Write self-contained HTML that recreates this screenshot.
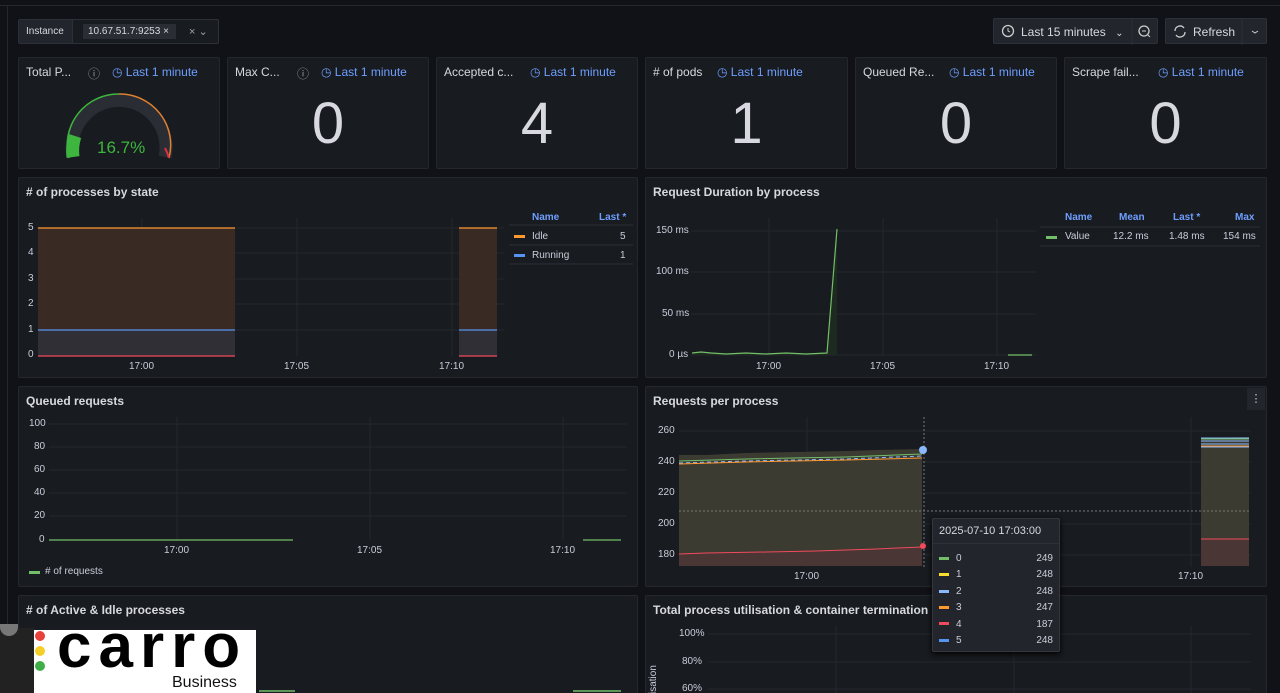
<!DOCTYPE html>
<html><head><meta charset="utf-8"><style>
*{box-sizing:border-box;margin:0;padding:0}
html,body{width:1280px;height:693px;overflow:hidden}
body{background:#111217;font-family:"Liberation Sans",sans-serif;color:#ccccdc;position:relative;font-size:11px}
.p{position:absolute;background:#181b1f;border:1px solid #24272e;border-radius:2px;overflow:hidden}
.t{position:absolute;left:7px;top:7px;font-size:12px;font-weight:bold;color:#d8d9e0}
.lm{position:absolute;top:7px;font-size:12px;color:#6e9fff}
.big{position:absolute;left:0;right:0;top:32px;text-align:center;font-size:58px;color:#d8d9e0}
.ax{position:absolute;font-size:10px;color:#ccccdc}
svg{position:absolute;left:0;top:0}
.btn{position:absolute;background:#22252b;border:1px solid #2c3038;border-radius:2px;color:#d8d9e0;font-size:12px}
</style></head><body>
<div style="position:absolute;left:0;top:0;width:1280px;height:6px;border-bottom:1px solid #24272e"></div>
<div style="position:absolute;left:0;top:6px;width:8px;height:687px;border-right:1px solid #24272e"></div>
<!-- instance -->
<div class="btn" style="left:18px;top:19px;width:201px;height:25px;background:#181b1f">
<div style="position:absolute;left:0;top:0;width:54px;height:23px;border-right:1px solid #2c3038;background:#22252b;padding:6px 0 0 7px;font-size:10px">Instance</div>
<div style="position:absolute;left:64px;top:4px;width:93px;height:15px;background:#2a2d33;font-size:10px;padding:2px 0 0 5px">10.67.51.7:9253 ×</div>
<div style="position:absolute;left:170px;top:5px;font-size:11px;color:#9fa1a8">× ⌄</div></div>
<div class="btn" style="left:993px;top:18px;width:165px;height:26px;padding:6px 0 0 27px">Last 15 minutes <span style="margin-left:6px;font-size:10px">⌄</span>
<svg width="165" height="26"><circle cx="14" cy="12" r="5.5" fill="none" stroke="#ccc" stroke-width="1.3"/><path d="M14 9v3l2 1" stroke="#ccc" fill="none"/><line x1="138" y1="0" x2="138" y2="26" stroke="#2c3038"/><circle cx="150" cy="12" r="5" fill="none" stroke="#ccc" stroke-width="1.3"/><path d="M148 12h4M154 16l2 2" stroke="#ccc"/></svg></div>
<div class="btn" style="left:1165px;top:18px;width:102px;height:26px;padding:6px 0 0 27px">Refresh
<svg width="102" height="26"><path d="M9 12a5 5 0 0 1 9-3M19 13a5 5 0 0 1-9 3" stroke="#ccc" fill="none" stroke-width="1.3"/><line x1="76" y1="0" x2="76" y2="26" stroke="#2c3038"/><path d="M86 12l3 2 3-2" stroke="#ccc" fill="none"/></svg></div>

<!-- stats -->
<div class="p" style="left:18px;top:57px;width:202px;height:112px"><div class="t" style="font-weight:normal">Total P...</div><div class="lm" style="left:69px;color:#999">ⓘ</div><div class="lm" style="left:93px">◷ Last 1 minute</div>
<svg width="202" height="112"><path d="M54 99A47 47 0 1 1 146 99" fill="none" stroke="#2a2d33" stroke-width="13"/><path d="M54 99A47 47 0 0 1 56 78" fill="none" stroke="#3eb53e" stroke-width="13"/><path d="M50 100A51 51 0 0 1 100 36" fill="none" stroke="#3eb53e" stroke-width="1.5"/><path d="M100 36A51 51 0 0 1 150 100" fill="none" stroke="#e08030" stroke-width="1.5"/><path d="M146 90A51 51 0 0 1 150 100" fill="none" stroke="#e02f44" stroke-width="2"/></svg>
<div style="position:absolute;left:78px;top:80px;font-size:17px;color:#3eb53e">16.7%</div></div>
<div class="p" style="left:227px;top:57px;width:202px;height:112px"><div class="t" style="font-weight:normal">Max C...</div><div class="lm" style="left:69px;color:#999">ⓘ</div><div class="lm" style="left:93px">◷ Last 1 minute</div><div class="big">0</div></div>
<div class="p" style="left:436px;top:57px;width:202px;height:112px"><div class="t" style="font-weight:normal">Accepted c...</div><div class="lm" style="left:93px">◷ Last 1 minute</div><div class="big">4</div></div>
<div class="p" style="left:645px;top:57px;width:203px;height:112px"><div class="t" style="font-weight:normal">#&nbsp;of pods</div><div class="lm" style="left:71px">◷ Last 1 minute</div><div class="big">1</div></div>
<div class="p" style="left:855px;top:57px;width:202px;height:112px"><div class="t" style="font-weight:normal">Queued Re...</div><div class="lm" style="left:93px">◷ Last 1 minute</div><div class="big">0</div></div>
<div class="p" style="left:1064px;top:57px;width:203px;height:112px"><div class="t" style="font-weight:normal">Scrape fail...</div><div class="lm" style="left:93px">◷ Last 1 minute</div><div class="big">0</div></div>

<!-- processes by state -->
<div class="p" style="left:18px;top:177px;width:620px;height:201px"><div class="t">#&nbsp;of processes by state</div>
<svg width="620" height="201"><g stroke="#24272e"><line x1="18" y1="50" x2="485" y2="50"/><line x1="18" y1="75" x2="485" y2="75"/><line x1="18" y1="101" x2="485" y2="101"/><line x1="18" y1="126" x2="485" y2="126"/><line x1="18" y1="152" x2="485" y2="152"/><line x1="123" y1="40" x2="123" y2="178"/><line x1="278" y1="40" x2="278" y2="178"/><line x1="433" y1="40" x2="433" y2="178"/></g>
<rect x="19" y="50" width="197" height="102" fill="#3a2a24"/><rect x="19" y="152" width="197" height="26" fill="#302f36"/><rect x="440" y="50" width="38" height="102" fill="#3a2a24"/><rect x="440" y="152" width="38" height="26" fill="#302f36"/>
<path d="M19 50h197M440 50h38" stroke="#ff9830" stroke-width="1.2"/><path d="M19 152h197M440 152h38" stroke="#5794f2" stroke-width="1.2"/><path d="M19 178h197M440 178h38" stroke="#f2495c" stroke-width="1.2"/>
<line x1="490" y1="47" x2="614" y2="47" stroke="#2c3038"/><line x1="490" y1="67" x2="614" y2="67" stroke="#2c3038"/><line x1="490" y1="86" x2="614" y2="86" stroke="#2c3038"/>
<rect x="495" y="57" width="11" height="3" fill="#ff9830"/><rect x="495" y="76" width="11" height="3" fill="#5794f2"/></svg>
<div class="ax" style="left:9px;top:44px">5</div><div class="ax" style="left:9px;top:69px">4</div><div class="ax" style="left:9px;top:95px">3</div><div class="ax" style="left:9px;top:120px">2</div><div class="ax" style="left:9px;top:146px">1</div><div class="ax" style="left:9px;top:171px">0</div>
<div class="ax" style="left:110px;top:183px">17:00</div><div class="ax" style="left:265px;top:183px">17:05</div><div class="ax" style="left:420px;top:183px">17:10</div>
<div class="ax" style="left:513px;top:34px;color:#6e9fff;font-weight:bold">Name</div><div class="ax" style="left:580px;top:34px;color:#6e9fff;font-weight:bold">Last *</div>
<div class="ax" style="left:513px;top:53px">Idle</div><div class="ax" style="left:601px;top:53px">5</div><div class="ax" style="left:513px;top:72px">Running</div><div class="ax" style="left:601px;top:72px">1</div></div>

<!-- request duration -->
<div class="p" style="left:645px;top:177px;width:622px;height:201px"><div class="t">Request Duration by process</div>
<svg width="622" height="201"><g stroke="#24272e"><line x1="45" y1="53" x2="390" y2="53"/><line x1="45" y1="94" x2="390" y2="94"/><line x1="45" y1="136" x2="390" y2="136"/><line x1="45" y1="177" x2="390" y2="177"/><line x1="123" y1="40" x2="123" y2="178"/><line x1="237" y1="40" x2="237" y2="178"/><line x1="351" y1="40" x2="351" y2="178"/></g>
<path d="M46 175L55 174L65 175L80 176L100 175L120 176L140 175L160 176L181 175L191 51L191 177L46 177Z" fill="#1e2a1f"/>
<path d="M46 175L55 174L65 175L80 176L100 175L120 176L140 175L160 176L181 175L191 51" fill="none" stroke="#73bf69" stroke-width="1.2"/><path d="M362 177h24" stroke="#73bf69" stroke-width="1.2"/>
<line x1="394" y1="49" x2="614" y2="49" stroke="#2c3038"/><line x1="394" y1="68" x2="614" y2="68" stroke="#2c3038"/><rect x="400" y="58" width="11" height="3" fill="#73bf69"/></svg>
<div class="ax" style="left:10px;top:47px">150 ms</div><div class="ax" style="left:10px;top:88px">100 ms</div><div class="ax" style="left:16px;top:130px">50 ms</div><div class="ax" style="left:23px;top:171px">0 µs</div>
<div class="ax" style="left:110px;top:183px">17:00</div><div class="ax" style="left:224px;top:183px">17:05</div><div class="ax" style="left:338px;top:183px">17:10</div>
<div class="ax" style="left:419px;top:34px;color:#6e9fff;font-weight:bold">Name</div><div class="ax" style="left:473px;top:34px;color:#6e9fff;font-weight:bold">Mean</div><div class="ax" style="left:527px;top:34px;color:#6e9fff;font-weight:bold">Last *</div><div class="ax" style="left:589px;top:34px;color:#6e9fff;font-weight:bold">Max</div>
<div class="ax" style="left:419px;top:53px">Value</div><div class="ax" style="left:467px;top:53px">12.2 ms</div><div class="ax" style="left:523px;top:53px">1.48 ms</div><div class="ax" style="left:577px;top:53px">154 ms</div></div>

<!-- queued -->
<div class="p" style="left:18px;top:386px;width:620px;height:201px"><div class="t">Queued requests</div>
<svg width="620" height="201"><g stroke="#24272e"><line x1="30" y1="37" x2="608" y2="37"/><line x1="30" y1="60" x2="608" y2="60"/><line x1="30" y1="83" x2="608" y2="83"/><line x1="30" y1="106" x2="608" y2="106"/><line x1="30" y1="129" x2="608" y2="129"/><line x1="158" y1="30" x2="158" y2="153"/><line x1="351" y1="30" x2="351" y2="153"/><line x1="544" y1="30" x2="544" y2="153"/></g>
<path d="M30 153h244M564 153h38" stroke="#73bf69" stroke-width="1.2"/><rect x="10" y="184" width="11" height="3" fill="#73bf69"/></svg>
<div class="ax" style="left:10px;top:31px">100</div><div class="ax" style="left:15px;top:54px">80</div><div class="ax" style="left:15px;top:77px">60</div><div class="ax" style="left:15px;top:100px">40</div><div class="ax" style="left:15px;top:123px">20</div><div class="ax" style="left:20px;top:147px">0</div>
<div class="ax" style="left:145px;top:158px">17:00</div><div class="ax" style="left:338px;top:158px">17:05</div><div class="ax" style="left:531px;top:158px">17:10</div>
<div class="ax" style="left:26px;top:179px">#&nbsp;of requests</div></div>

<!-- requests per process -->
<div class="p" style="left:645px;top:386px;width:622px;height:201px"><div class="t">Requests per process</div>
<div style="position:absolute;right:1px;top:1px;width:18px;height:22px;background:#22252b;color:#ccc;text-align:center;padding-top:4px">⋮</div>
<svg width="622" height="201"><g stroke="#24272e"><line x1="33" y1="44" x2="605" y2="44"/><line x1="33" y1="75" x2="605" y2="75"/><line x1="33" y1="106" x2="605" y2="106"/><line x1="33" y1="137" x2="605" y2="137"/><line x1="33" y1="168" x2="605" y2="168"/><line x1="161" y1="30" x2="161" y2="180"/><line x1="545" y1="30" x2="545" y2="180"/></g>
<path d="M33 68L60 68L100 66L150 65L200 64L230 63L276 62L276 179L33 179Z" fill="#3b3b32"/>
<path d="M33 167L60 166L120 165L170 164L230 162L276 160L276 179L33 179Z" fill="#4a3634"/>
<path d="M555 51L603 50L603 179L555 179Z" fill="#3b3b32"/><path d="M555 152L603 152L603 179L555 179Z" fill="#4a3634"/>
<path d="M33 74L100 72L200 70L276 67" stroke="#73bf69" fill="none"/><path d="M33 76L100 74L200 72L276 69" stroke="#8ab8ff" fill="none" stroke-dasharray="4 3"/><path d="M33 77L100 75L200 73L276 71" stroke="#ff9830" fill="none"/>
<path d="M33 167L60 166L120 165L170 164L230 162L276 160" stroke="#f2495c" fill="none"/>
<path d="M555 51h48M555 54h48M555 57h48M555 60h48" stroke="#8ab8ff"/><path d="M555 52h48" stroke="#73bf69"/><path d="M555 59h48" stroke="#ff9830"/><path d="M555 152h48" stroke="#f2495c"/>
<line x1="278" y1="30" x2="278" y2="180" stroke="#777" stroke-dasharray="2 2"/><line x1="33" y1="124" x2="605" y2="124" stroke="#777" stroke-dasharray="2 2"/>
<circle cx="277" cy="63" r="4" fill="#8ab8ff"/><circle cx="277" cy="159" r="3" fill="#f2495c"/></svg>
<div class="ax" style="left:12px;top:38px">260</div><div class="ax" style="left:12px;top:69px">240</div><div class="ax" style="left:12px;top:100px">220</div><div class="ax" style="left:12px;top:131px">200</div><div class="ax" style="left:12px;top:162px">180</div>
<div class="ax" style="left:148px;top:184px">17:00</div><div class="ax" style="left:532px;top:184px">17:10</div></div>

<!-- bottom row -->
<div class="p" style="left:18px;top:595px;width:620px;height:110px"><div class="t">#&nbsp;of Active &amp; Idle processes</div>
<svg width="620" height="110"><path d="M240 95h36M554 95h48" stroke="#73bf69" stroke-width="1.5"/></svg></div>
<div class="p" style="left:645px;top:595px;width:622px;height:110px"><div class="t">Total process utilisation &amp; container termination</div>
<svg width="622" height="110"><g stroke="#24272e"><line x1="62" y1="38" x2="605" y2="38"/><line x1="62" y1="66" x2="605" y2="66"/><line x1="62" y1="93" x2="605" y2="93"/><line x1="190" y1="30" x2="190" y2="110"/><line x1="368" y1="30" x2="368" y2="110"/><line x1="545" y1="30" x2="545" y2="110"/></g></svg>
<div class="ax" style="left:33px;top:32px">100%</div><div class="ax" style="left:36px;top:60px">80%</div><div class="ax" style="left:36px;top:87px">60%</div>
<div class="ax" style="left:2px;transform:rotate(-90deg);transform-origin:left top;top:98px">isation</div></div>

<!-- tooltip -->
<div style="position:absolute;left:932px;top:518px;width:128px;height:134px;background:#22252b;border:1px solid #34373d;border-radius:2px;box-shadow:0 2px 6px #000">
<div style="padding:6px 6px;font-size:11px;color:#d8d9e0;border-bottom:1px solid #2c3038">2025-07-10 17:03:00</div>
<div style="position:absolute;left:6px;top:32px;width:114px;font-size:10px;line-height:16.4px">
<div><span style="display:inline-block;width:10px;height:3px;background:#73bf69;vertical-align:middle;margin-right:7px"></span>0<span style="float:right">249</span></div>
<div><span style="display:inline-block;width:10px;height:3px;background:#fade2a;vertical-align:middle;margin-right:7px"></span>1<span style="float:right">248</span></div>
<div><span style="display:inline-block;width:10px;height:3px;background:#8ab8ff;vertical-align:middle;margin-right:7px"></span>2<span style="float:right">248</span></div>
<div><span style="display:inline-block;width:10px;height:3px;background:#ff9830;vertical-align:middle;margin-right:7px"></span>3<span style="float:right">247</span></div>
<div><span style="display:inline-block;width:10px;height:3px;background:#f2495c;vertical-align:middle;margin-right:7px"></span>4<span style="float:right">187</span></div>
<div><span style="display:inline-block;width:10px;height:3px;background:#5794f2;vertical-align:middle;margin-right:7px"></span>5<span style="float:right">248</span></div></div></div>

<!-- logo -->
<div style="position:absolute;left:0;top:628px;width:34px;height:65px;background:#222"></div>
<div style="position:absolute;left:0;top:624px;width:18px;height:12px;border-radius:0 0 9px 9px;background:#777"></div>
<div style="position:absolute;left:34px;top:630px;width:222px;height:63px;background:#fff;overflow:hidden">
<div style="position:absolute;left:1px;top:1px;width:10px;height:10px;border-radius:50%;background:#e8413c"></div>
<div style="position:absolute;left:1px;top:16px;width:10px;height:10px;border-radius:50%;background:#f4cf2a"></div>
<div style="position:absolute;left:1px;top:31px;width:10px;height:10px;border-radius:50%;background:#3fae49"></div>
<div style="position:absolute;left:23px;top:-14px;font-size:62px;font-weight:bold;color:#000;line-height:62px;letter-spacing:7px">carro</div>
<div style="position:absolute;left:138px;top:44px;font-size:16px;color:#111">Business</div></div>
</body></html>
